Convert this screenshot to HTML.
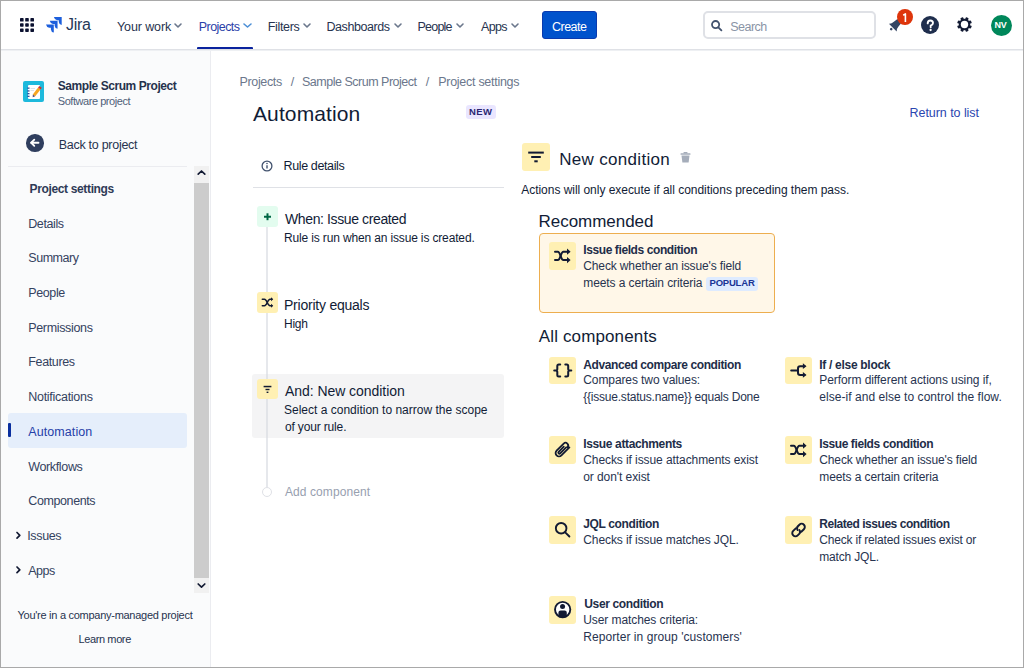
<!DOCTYPE html>
<html><head><meta charset="utf-8">
<style>
html,body{margin:0;padding:0}
body{width:1024px;height:668px;overflow:hidden;position:relative;background:#fff;font-family:"Liberation Sans",sans-serif;}
.a{position:absolute}
.t{position:absolute;white-space:nowrap;line-height:20px;font-family:"Liberation Sans",sans-serif}
.ib{position:absolute;background:#FFF0B3;border-radius:3px}
svg{position:absolute;overflow:visible}
</style></head><body>
<!-- sidebar bg -->
<div class="a" style="left:1px;top:50px;width:209px;height:618px;background:#FAFBFC"></div>
<div class="a" style="left:210px;top:50px;width:1px;height:618px;background:#EBECF0"></div>
<!-- nav bottom border/shadow -->
<div class="a" style="left:0;top:49px;width:1024px;height:1px;background:#DFE1E6"></div>
<div class="a" style="left:0;top:50px;width:1024px;height:1px;background:#EEF0F3"></div>

<!-- grid icon -->
<svg style="left:20px;top:18px" width="14" height="14" viewBox="0 0 14 14"><g fill="#0B1130"><rect x="0" y="0" width="3.6" height="3.6" rx="0.7"/><rect x="5.2" y="0" width="3.6" height="3.6" rx="0.7"/><rect x="10.4" y="0" width="3.6" height="3.6" rx="0.7"/><rect x="0" y="5.2" width="3.6" height="3.6" rx="0.7"/><rect x="5.2" y="5.2" width="3.6" height="3.6" rx="0.7"/><rect x="10.4" y="5.2" width="3.6" height="3.6" rx="0.7"/><rect x="0" y="10.4" width="3.6" height="3.6" rx="0.7"/><rect x="5.2" y="10.4" width="3.6" height="3.6" rx="0.7"/><rect x="10.4" y="10.4" width="3.6" height="3.6" rx="0.7"/></g></svg>
<!-- jira logo -->
<svg style="left:46px;top:17px" width="16" height="16" viewBox="0 0 16 16">
<g fill="#1D5FDC">
<path d="M7.9 0.1 H15.7 V7.9 Q13 7.4 12.8 4.9 V3.2 H11.1 Q8.5 3 7.9 0.1 Z"/>
<path d="M3.75 3.85 H11.55 V11.65 Q8.85 11.15 8.65 8.65 V6.95 H6.95 Q4.35 6.75 3.75 3.85 Z"/>
<path d="M0 7.6 H7.8 V15.4 Q5.1 14.9 4.9 12.4 V10.7 H3.2 Q0.6 10.5 0 7.6 Z"/>
</g></svg>
<!-- Projects underline -->
<div class="a" style="left:197px;top:46.5px;width:56px;height:2.75px;background:#0A239E;border-radius:1px 1px 0 0"></div>
<!-- nav chevrons -->
<svg style="left:0;top:0" width="1024" height="50">
<g fill="none" stroke="#6B778C" stroke-width="1.6" stroke-linecap="round" stroke-linejoin="round">
<polyline points="175,24 178,27 181,24"/>
<polyline points="304,24 307,27 310,24"/>
<polyline points="395,24 398,27 401,24"/>
<polyline points="457,24 460,27 463,24"/>
<polyline points="512,24 515,27 518,24"/>
</g>
<polyline points="244,24 247.5,27 251,24" fill="none" stroke="#4C8FD6" stroke-width="1.6" stroke-linecap="round" stroke-linejoin="round"/>
</svg>
<!-- create button -->
<div class="a" style="left:541.5px;top:11px;width:55.5px;height:28px;box-sizing:border-box;border:1px solid #0A3AAE;background:#0052CC;border-radius:3px"></div>
<!-- search -->
<div class="a" style="left:703px;top:11px;width:173px;height:28px;box-sizing:border-box;border:2px solid #DFE1E6;border-radius:5px;background:#fff"></div>
<svg style="left:711px;top:20px" width="12" height="12" viewBox="0 0 12 12">
<circle cx="4.6" cy="4.6" r="3.6" fill="none" stroke="#42526E" stroke-width="1.8"/>
<line x1="7.3" y1="7.3" x2="10.4" y2="10.4" stroke="#42526E" stroke-width="1.8" stroke-linecap="round"/>
</svg>
<!-- bell -->
<svg style="left:0;top:0" width="1024" height="50">
<g transform="translate(895.6 24.7) rotate(45)" fill="#344563"><path d="M-5.5 4 Q-3.6 2.8 -3.3 -0.8 L-2.9 -4.6 Q0 -8 2.9 -4.6 L3.3 -0.8 Q3.6 2.8 5.5 4 Z"/><circle cx="0" cy="6.2" r="1.3"/></g>
</svg>
<div class="a" style="left:897.2px;top:9.1px;width:15.8px;height:15.8px;border-radius:50%;background:#DE350B"></div>
<svg style="left:0;top:0" width="1024" height="50"><path d="M903.2 15.2 L905.4 13.9 V21.9" fill="none" stroke="#fff" stroke-width="1.6" stroke-linejoin="round"/></svg>
<!-- help -->
<div class="a" style="left:921px;top:16px;width:18px;height:18px;border-radius:50%;background:#1F2E4D"></div>
<svg style="left:0;top:0" width="1024" height="50"><path d="M927.7 23.4 Q927.7 20.5 930.3 20.5 Q933 20.5 933 23.1 Q933 24.7 930.7 25.7 V27.3" fill="none" stroke="#fff" stroke-width="1.9" stroke-linecap="round"/><circle cx="930.6" cy="30" r="1.15" fill="#fff"/></svg>
<!-- gear -->
<svg style="left:956.1px;top:16.1px" width="17" height="17" viewBox="-8.5 -8.5 17 17">
<g fill="#121A33"><circle r="5.7"/><rect x="-1.5" y="-7.4" width="3" height="2.8" rx="0.7" transform="rotate(22.5)"/><rect x="-1.5" y="-7.4" width="3" height="2.8" rx="0.7" transform="rotate(67.5)"/><rect x="-1.5" y="-7.4" width="3" height="2.8" rx="0.7" transform="rotate(112.5)"/><rect x="-1.5" y="-7.4" width="3" height="2.8" rx="0.7" transform="rotate(157.5)"/><rect x="-1.5" y="-7.4" width="3" height="2.8" rx="0.7" transform="rotate(202.5)"/><rect x="-1.5" y="-7.4" width="3" height="2.8" rx="0.7" transform="rotate(247.5)"/><rect x="-1.5" y="-7.4" width="3" height="2.8" rx="0.7" transform="rotate(292.5)"/><rect x="-1.5" y="-7.4" width="3" height="2.8" rx="0.7" transform="rotate(337.5)"/></g>
<circle r="3.7" fill="#fff"/>
</svg>
<!-- avatar -->
<div class="a" style="left:991px;top:14.5px;width:21px;height:21px;border-radius:50%;background:#00875A"></div>
<div class="t" style="left:994.5px;top:15px;font-size:9px;font-weight:bold;color:#fff;letter-spacing:-0.3px">NV</div>

<!-- project avatar -->
<div class="a" style="left:23px;top:81px;width:21px;height:21px;border-radius:2px;background:#1DB9DC"></div>
<div class="a" style="left:28px;top:84.5px;width:12px;height:14.5px;border-radius:1px;background:#fff"></div>
<svg style="left:23px;top:81px" width="21" height="21" viewBox="0 0 21 21">
<g fill="#3050A0"><rect x="4.3" y="6.5" width="2.2" height="1.3"/><rect x="4.3" y="9.3" width="2.2" height="1.3"/><rect x="4.3" y="12" width="2.2" height="1.3"/><rect x="4.3" y="14.7" width="2.2" height="1.3"/></g>
<g stroke="#C8D0DA" stroke-width="0.6"><line x1="7.5" y1="7.5" x2="12" y2="7.5"/><line x1="7.5" y1="9.5" x2="11" y2="9.5"/></g>
<path d="M12.23 15.35 L9.83 13.55 L15.1 6.6 L17.5 8.4 Z" fill="#F5A623"/>
<path d="M15.1 6.6 L17.5 8.4 L18.8 6.7 L16.4 4.9 Z" fill="#D0312D"/>
<path d="M9.7 16.2 L9.83 13.55 L12.23 15.35 Z" fill="#4A4A7A"/>
</svg>
<!-- back icon -->
<div class="a" style="left:26px;top:134px;width:17.5px;height:17.5px;border-radius:50%;background:#2F3E5E"></div>
<svg style="left:26px;top:134px" width="18" height="18" viewBox="0 0 18 18">
<g fill="none" stroke="#fff" stroke-width="1.8" stroke-linecap="round" stroke-linejoin="round">
<line x1="5.2" y1="8.75" x2="12.5" y2="8.75"/><polyline points="8.3,5.6 5.2,8.75 8.3,11.9"/>
</g></svg>
<!-- sidebar divider -->
<div class="a" style="left:8px;top:166px;width:179px;height:1px;background:#EBECF0"></div>
<!-- scrollbar -->
<div class="a" style="left:194px;top:166px;width:15px;height:427px;background:#F1F1F1"></div>
<div class="a" style="left:194px;top:182.5px;width:15px;height:395.5px;background:#CCCCCC"></div>
<svg style="left:194px;top:166px" width="15" height="427">
<polyline points="4.2,8.2 7.5,5 10.8,8.2" fill="none" stroke="#121A33" stroke-width="1.7" stroke-linecap="round" stroke-linejoin="round"/>
<polyline points="4.2,418 7.5,421.2 10.8,418" fill="none" stroke="#121A33" stroke-width="1.7" stroke-linecap="round" stroke-linejoin="round"/>
</svg>
<!-- automation selected -->
<div class="a" style="left:8px;top:413px;width:179px;height:34.5px;border-radius:3px;background:#E5EEFB"></div>
<div class="a" style="left:8px;top:423px;width:3px;height:14px;border-radius:1px;background:#0A2F9E"></div>
<!-- issues/apps chevrons -->
<svg style="left:0;top:0" width="210" height="668">
<g fill="none" stroke="#121A33" stroke-width="1.7" stroke-linecap="round" stroke-linejoin="round">
<polyline points="17,532.5 19.8,535.3 17,538.1"/>
<polyline points="17,567 19.8,569.8 17,572.6"/>
</g></svg>

<!-- NEW lozenge -->
<div class="a" style="left:466px;top:105px;width:29.5px;height:14px;border-radius:3px;background:#EAE6FF"></div>
<!-- info icon -->
<svg style="left:261px;top:159.5px" width="12" height="12" viewBox="0 0 12 12">
<circle cx="6" cy="6" r="4.9" fill="none" stroke="#42526E" stroke-width="1.3"/>
<line x1="6" y1="5.3" x2="6" y2="8.5" stroke="#42526E" stroke-width="1.4"/>
<circle cx="6" cy="3.5" r="0.8" fill="#42526E"/>
</svg>
<!-- rule details divider -->
<div class="a" style="left:252.5px;top:186.5px;width:251.5px;height:1.5px;background:#DFE1E6"></div>
<!-- timeline -->
<div class="a" style="left:266px;top:226px;width:2px;height:261px;background:#E6E8EC"></div>
<div class="a" style="left:252px;top:374px;width:252px;height:64px;border-radius:3px;background:#F4F4F5"></div>
<div class="a" style="left:266px;top:374px;width:2px;height:6px;background:#E2E4E8"></div>
<div class="a" style="left:266px;top:398px;width:2px;height:40px;background:#E2E4E8"></div>
<div class="a" style="left:257px;top:206px;width:21px;height:21px;border-radius:3px;background:#E3FCEF"></div>
<svg style="left:257px;top:206px" width="21" height="21">
<g stroke="#006644" stroke-width="2"><line x1="10.5" y1="7.3" x2="10.5" y2="14.2"/><line x1="7" y1="10.75" x2="14" y2="10.75"/></g></svg>
<div class="ib" style="left:257px;top:292px;width:21px;height:21px"></div>
<svg style="left:257px;top:292px" width="21" height="21" viewBox="0 0 21 21">
<g fill="none" stroke="#121A33" stroke-width="1.5" stroke-linecap="round">
<path d="M5.3 7.2 H7.5 C10 7.2 10.5 13.8 13 13.8 H14.8"/>
<path d="M5.3 13.8 H7.5 C10 13.8 10.5 7.2 13 7.2 H14.8"/>
</g>
<g fill="#121A33"><path d="M14 5.2 L16.2 7.2 L14 9.2 Z"/><path d="M14 11.8 L16.2 13.8 L14 15.8 Z"/></g>
</svg>
<div class="ib" style="left:257px;top:378.5px;width:21px;height:20.5px"></div>
<svg style="left:257px;top:378.5px" width="21" height="21" viewBox="0 0 21 21">
<g fill="#121A33"><rect x="6.6" y="6.8" width="7.8" height="1.5"/><rect x="8.5" y="9.8" width="4" height="1.4"/><rect x="9.6" y="12.6" width="1.8" height="1.4"/></g>
</svg>
<div class="a" style="left:261.75px;top:486.5px;width:10.5px;height:10.5px;box-sizing:border-box;border-radius:50%;border:1.5px solid #DFE1E6;background:#fff"></div>

<!-- New condition header -->
<div class="ib" style="left:521.5px;top:143px;width:28px;height:28px"></div>
<svg style="left:521.5px;top:143px" width="28" height="28" viewBox="0 0 28 28">
<g fill="#121A33"><rect x="6.2" y="8.6" width="15.6" height="2"/><rect x="9.2" y="13" width="9.6" height="2"/><rect x="12.3" y="17.3" width="3.4" height="2"/></g>
</svg>
<svg style="left:680px;top:151.5px" width="11" height="11" viewBox="0 0 11 11">
<g fill="#A5ADBA"><rect x="0.5" y="1.2" width="10" height="1.6" rx="0.5"/><rect x="3.5" y="0" width="4" height="1.6" rx="0.5"/><path d="M1.5 3.5 H9.5 L8.6 10.5 H2.4 Z"/></g>
</svg>

<!-- recommended card -->
<div class="a" style="left:539px;top:232.5px;width:236px;height:80px;box-sizing:border-box;border:1.5px solid #EDAE4F;border-radius:4px;background:#FFF7E8"></div>
<div class="ib" style="left:548.75px;top:242px;width:27.5px;height:27.5px"></div>
<div class="a" style="left:706px;top:277px;width:51.5px;height:13.5px;border-radius:3px;background:#DEEBFF"></div>

<!-- component icon boxes -->
<div class="ib" style="left:548.75px;top:356.75px;width:27.5px;height:27.5px"></div>
<div class="ib" style="left:548.75px;top:436.25px;width:27.5px;height:27.5px"></div>
<div class="ib" style="left:548.75px;top:516.25px;width:27.5px;height:27.5px"></div>
<div class="ib" style="left:548.75px;top:596.25px;width:27.5px;height:27.5px"></div>
<div class="ib" style="left:784.75px;top:356.75px;width:27.5px;height:27.5px"></div>
<div class="ib" style="left:784.75px;top:436.25px;width:27.5px;height:27.5px"></div>
<div class="ib" style="left:784.75px;top:516.25px;width:27.5px;height:27.5px"></div>

<svg style="left:548.75px;top:242px" width="28" height="28" viewBox="0 0 28 28">
<g fill="none" stroke="#121A33" stroke-width="2" stroke-linecap="round"><path d="M6 9.7 H8.8 C11.6 9.7 11.6 18.1 14.4 18.1 H19"/><path d="M6 18.1 H8.8 C11.6 18.1 11.6 9.7 14.4 9.7 H19"/></g>
<g fill="#121A33"><path d="M18 6.6 L21.6 9.7 L18 12.8 Z"/><path d="M18 15 L21.6 18.1 L18 21.2 Z"/></g></svg>
<svg style="left:548.75px;top:356.75px" width="28" height="28" viewBox="0 0 28 28">
<g fill="none" stroke="#121A33" stroke-width="2" stroke-linecap="round" stroke-linejoin="round">
<path d="M11.2 7.4 H9.8 Q8.3 7.4 8.3 8.9 V12 Q8.3 13.5 6.8 13.5 H5.2 M6.8 13.5 Q8.3 13.5 8.3 15 V18.1 Q8.3 19.6 9.8 19.6 H11.2"/>
<path d="M16.3 7.4 H17.7 Q19.2 7.4 19.2 8.9 V12 Q19.2 13.5 20.7 13.5 H22.3 M20.7 13.5 Q19.2 13.5 19.2 15 V18.1 Q19.2 19.6 17.7 19.6 H16.3"/>
</g></svg>
<svg style="left:784.75px;top:356.75px" width="28" height="28" viewBox="0 0 28 28">
<g fill="none" stroke="#121A33" stroke-width="2" stroke-linecap="round" stroke-linejoin="round">
<path d="M6.2 13.5 H12.8"/><path d="M19.5 9.2 H15.2 Q13 9.2 13 11.4 V15.7 Q13 17.9 15.2 17.9 H19.5"/></g>
<g fill="#121A33"><path d="M17.9 6.3 L21.5 9.2 L17.9 12.1 Z"/><path d="M17.9 15 L21.5 17.9 L17.9 20.8 Z"/></g></svg>
<svg style="left:548.75px;top:436.25px" width="28" height="28" viewBox="0 0 28 28">
<g transform="translate(13.4 13.6) rotate(-45)" fill="none" stroke="#121A33" stroke-width="1.8" stroke-linecap="round">
<path d="M6.5 3.4 H-4.8 A3.4 3.4 0 0 1 -4.8 -3.4 H5.2 A2.6 2.6 0 0 1 5.2 1.8"/>
<path d="M4.2 1.1 H-4.2 A1.1 1.1 0 0 1 -4.2 -1.1 H3"/>
</g></svg>
<svg style="left:784.75px;top:436.25px" width="28" height="28" viewBox="0 0 28 28">
<g fill="none" stroke="#121A33" stroke-width="2" stroke-linecap="round"><path d="M6 9.7 H8.8 C11.6 9.7 11.6 18.1 14.4 18.1 H19"/><path d="M6 18.1 H8.8 C11.6 18.1 11.6 9.7 14.4 9.7 H19"/></g>
<g fill="#121A33"><path d="M18 6.6 L21.6 9.7 L18 12.8 Z"/><path d="M18 15 L21.6 18.1 L18 21.2 Z"/></g></svg>
<svg style="left:548.75px;top:516.25px" width="28" height="28" viewBox="0 0 28 28">
<g fill="none" stroke="#121A33" stroke-width="1.9" stroke-linecap="round"><circle cx="12.15" cy="12.25" r="5.3"/><path d="M16.2 16.3 L20.4 20.5"/></g></svg>
<svg style="left:784.75px;top:516.25px" width="28" height="28" viewBox="0 0 28 28">
<g transform="translate(13.55 14.05) rotate(-45) scale(1.22)" fill="none" stroke="#121A33" stroke-width="1.6" stroke-linecap="round">
<path d="M-0.6 -2.6 H-3.6 A2.6 2.6 0 0 0 -3.6 2.6 H-1.8 Q0 2.6 0.5 0.6"/>
<path d="M0.6 2.6 H3.6 A2.6 2.6 0 0 0 3.6 -2.6 H1.8 Q0 -2.6 -0.5 -0.6"/>
</g></svg>
<svg style="left:548.75px;top:596.25px" width="28" height="28" viewBox="0 0 28 28">
<defs><clipPath id="uc"><circle cx="13.65" cy="13.55" r="7.6"/></clipPath></defs>
<circle cx="13.65" cy="13.55" r="7.65" fill="#fff" stroke="#121A33" stroke-width="1.9"/>
<circle cx="13.55" cy="10.6" r="2.5" fill="#121A33"/>
<g clip-path="url(#uc)"><rect x="9.4" y="14.6" width="8.4" height="9" rx="2.2" fill="#121A33"/></g>
</svg>


<div id="jira" class="t" style="left:66.10px;top:15.20px;font-size:16px;color:#253858;letter-spacing:-0.294px">Jira</div>
<div id="nav1" class="t" style="left:117.00px;top:16.50px;font-size:12.5px;color:#27334F;letter-spacing:-0.109px">Your work</div>
<div id="nav2" class="t" style="left:198.75px;top:16.50px;font-size:12.5px;color:#2A40A8;letter-spacing:-0.558px">Projects</div>
<div id="nav3" class="t" style="left:267.75px;top:16.50px;font-size:12.5px;color:#27334F;letter-spacing:-0.338px">Filters</div>
<div id="nav4" class="t" style="left:326.50px;top:16.50px;font-size:12.5px;color:#27334F;letter-spacing:-0.434px">Dashboards</div>
<div id="nav5" class="t" style="left:417.50px;top:16.50px;font-size:12.5px;color:#27334F;letter-spacing:-0.785px">People</div>
<div id="nav6" class="t" style="left:481.00px;top:16.50px;font-size:12.5px;color:#27334F;letter-spacing:-0.664px">Apps</div>
<div id="create" class="t" style="left:552.00px;top:16.50px;font-size:12.5px;color:#FFFFFF;letter-spacing:-0.525px">Create</div>
<div id="search" class="t" style="left:730.25px;top:16.50px;font-size:12.5px;color:#8A94A6;letter-spacing:-0.521px">Search</div>
<div id="proj" class="t" style="left:57.75px;top:75.50px;font-size:12px;font-weight:bold;color:#26324D;letter-spacing:-0.441px">Sample Scrum Project</div>
<div id="projsub" class="t" style="left:57.75px;top:90.50px;font-size:11px;color:#505F79;letter-spacing:-0.449px">Software project</div>
<div id="back" class="t" style="left:58.75px;top:134.75px;font-size:12.5px;color:#27334F;letter-spacing:-0.281px">Back to project</div>
<div id="psett" class="t" style="left:29.50px;top:179.00px;font-size:12px;font-weight:bold;color:#2E3A56;letter-spacing:-0.352px">Project settings</div>
<div id="side0" class="t" style="left:28.25px;top:213.50px;font-size:12.5px;color:#34425F;letter-spacing:-0.410px">Details</div>
<div id="side1" class="t" style="left:28.25px;top:248.22px;font-size:12.5px;color:#34425F;letter-spacing:-0.446px">Summary</div>
<div id="side2" class="t" style="left:28.25px;top:282.94px;font-size:12.5px;color:#34425F;letter-spacing:-0.389px">People</div>
<div id="side3" class="t" style="left:28.25px;top:317.66px;font-size:12.5px;color:#34425F;letter-spacing:-0.340px">Permissions</div>
<div id="side4" class="t" style="left:28.25px;top:352.38px;font-size:12.5px;color:#34425F;letter-spacing:-0.352px">Features</div>
<div id="side5" class="t" style="left:28.25px;top:387.10px;font-size:12.5px;color:#34425F;letter-spacing:-0.284px">Notifications</div>
<div id="side6" class="t" style="left:28.25px;top:421.82px;font-size:12.5px;color:#2540A8;letter-spacing:0.085px">Automation</div>
<div id="side7" class="t" style="left:28.25px;top:456.54px;font-size:12.5px;color:#34425F;letter-spacing:-0.359px">Workflows</div>
<div id="side8" class="t" style="left:28.25px;top:491.26px;font-size:12.5px;color:#34425F;letter-spacing:-0.394px">Components</div>
<div id="side9" class="t" style="left:27.25px;top:525.98px;font-size:12.5px;color:#34425F;letter-spacing:-0.361px">Issues</div>
<div id="side10" class="t" style="left:28.25px;top:560.70px;font-size:12.5px;color:#34425F;letter-spacing:-0.475px">Apps</div>
<div id="company" class="t" style="left:17.50px;top:604.50px;font-size:11px;color:#27334F;letter-spacing:-0.273px">You're in a company-managed project</div>
<div id="learn" class="t" style="left:78.50px;top:628.50px;font-size:11px;color:#27334F;letter-spacing:-0.389px">Learn more</div>
<div id="bc1" class="t" style="left:239.50px;top:72.00px;font-size:12.5px;color:#6B778C;letter-spacing:-0.344px">Projects</div>
<div id="bcs1" class="t" style="left:290.75px;top:72.00px;font-size:12.5px;color:#6B778C;letter-spacing:0.000px">/</div>
<div id="bc2" class="t" style="left:302.00px;top:72.00px;font-size:12.5px;color:#6B778C;letter-spacing:-0.492px">Sample Scrum Project</div>
<div id="bcs2" class="t" style="left:425.75px;top:72.00px;font-size:12.5px;color:#6B778C;letter-spacing:0.000px">/</div>
<div id="bc3" class="t" style="left:438.25px;top:72.00px;font-size:12.5px;color:#6B778C;letter-spacing:-0.280px">Project settings</div>
<div id="title" class="t" style="left:253.00px;top:103.50px;font-size:21px;color:#111C36;letter-spacing:0.113px">Automation</div>
<div id="newloz" class="t" style="left:469.00px;top:101.50px;font-size:9.5px;font-weight:bold;color:#2B2672;letter-spacing:0.418px">NEW</div>
<div id="ruled" class="t" style="left:283.50px;top:156.00px;font-size:12.5px;color:#111C36;letter-spacing:-0.370px">Rule details</div>
<div id="ret" class="t" style="left:909.50px;top:103.35px;font-size:12.5px;color:#2B46B0;letter-spacing:-0.051px">Return to list</div>
<div id="when" class="t" style="left:285.00px;top:209.25px;font-size:14px;color:#111C36;letter-spacing:-0.383px">When: Issue created</div>
<div id="whend" class="t" style="left:284.00px;top:228.00px;font-size:12px;color:#111C36;letter-spacing:-0.149px">Rule is run when an issue is created.</div>
<div id="prio" class="t" style="left:284.00px;top:295.00px;font-size:14px;color:#111C36;letter-spacing:-0.229px">Priority equals</div>
<div id="priod" class="t" style="left:284.00px;top:313.50px;font-size:12px;color:#111C36;letter-spacing:-0.247px">High</div>
<div id="and" class="t" style="left:285.00px;top:380.50px;font-size:14px;color:#111C36;letter-spacing:-0.052px">And: New condition</div>
<div id="andd1" class="t" style="left:284.00px;top:399.75px;font-size:12px;color:#111C36;letter-spacing:0.001px">Select a condition to narrow the scope</div>
<div id="andd2" class="t" style="left:285.00px;top:416.50px;font-size:12px;color:#111C36;letter-spacing:-0.158px">of your rule.</div>
<div id="addc" class="t" style="left:285.00px;top:482.25px;font-size:12px;color:#97A0AF;letter-spacing:0.078px">Add component</div>
<div id="newc" class="t" style="left:559.25px;top:150.00px;font-size:17px;color:#111C36;letter-spacing:0.310px">New condition</div>
<div id="actions" class="t" style="left:521.25px;top:179.75px;font-size:12px;color:#111C36;letter-spacing:-0.035px">Actions will only execute if all conditions preceding them pass.</div>
<div id="rec" class="t" style="left:538.50px;top:211.75px;font-size:17px;color:#111C36;letter-spacing:-0.029px">Recommended</div>
<div id="allc" class="t" style="left:538.75px;top:326.75px;font-size:17px;color:#111C36;letter-spacing:0.136px">All components</div>
<div id="rc_t" class="t" style="left:583.25px;top:239.90px;font-size:12px;font-weight:bold;color:#222D48;letter-spacing:-0.402px">Issue fields condition</div>
<div id="rc_d1" class="t" style="left:583.25px;top:255.80px;font-size:12px;color:#27334F;letter-spacing:-0.128px">Check whether an issue's field</div>
<div id="rc_d2" class="t" style="left:583.25px;top:272.70px;font-size:12px;color:#27334F;letter-spacing:-0.093px">meets a certain criteria</div>
<div id="popular" class="t" style="left:709.50px;top:273.00px;font-size:9.5px;font-weight:bold;color:#1A3494;letter-spacing:-0.200px">POPULAR</div>
<div id="c00_t" class="t" style="left:583.25px;top:354.65px;font-size:12px;font-weight:bold;color:#222D48;letter-spacing:-0.401px">Advanced compare condition</div>
<div id="c00_d0" class="t" style="left:583.25px;top:370.35px;font-size:12px;color:#27334F;letter-spacing:-0.094px">Compares two values:</div>
<div id="c00_d1" class="t" style="left:583.25px;top:387.25px;font-size:12px;color:#27334F;letter-spacing:-0.218px">{{issue.status.name}} equals Done</div>
<div id="c01_t" class="t" style="left:583.25px;top:434.15px;font-size:12px;font-weight:bold;color:#222D48;letter-spacing:-0.360px">Issue attachments</div>
<div id="c01_d0" class="t" style="left:583.25px;top:449.85px;font-size:12px;color:#27334F;letter-spacing:-0.083px">Checks if issue attachments exist</div>
<div id="c01_d1" class="t" style="left:583.25px;top:466.75px;font-size:12px;color:#27334F;letter-spacing:-0.078px">or don't exist</div>
<div id="c02_t" class="t" style="left:583.25px;top:514.15px;font-size:12px;font-weight:bold;color:#222D48;letter-spacing:-0.369px">JQL condition</div>
<div id="c02_d0" class="t" style="left:583.25px;top:529.85px;font-size:12px;color:#27334F;letter-spacing:-0.088px">Checks if issue matches JQL.</div>
<div id="c03_t" class="t" style="left:584.25px;top:594.15px;font-size:12px;font-weight:bold;color:#222D48;letter-spacing:-0.355px">User condition</div>
<div id="c03_d0" class="t" style="left:583.25px;top:609.85px;font-size:12px;color:#27334F;letter-spacing:-0.083px">User matches criteria:</div>
<div id="c03_d1" class="t" style="left:583.25px;top:626.75px;font-size:12px;color:#27334F;letter-spacing:0.066px">Reporter in group 'customers'</div>
<div id="c10_t" class="t" style="left:819.25px;top:354.65px;font-size:12px;font-weight:bold;color:#222D48;letter-spacing:-0.296px">If / else block</div>
<div id="c10_d0" class="t" style="left:819.25px;top:370.35px;font-size:12px;color:#27334F;letter-spacing:-0.077px">Perform different actions using if,</div>
<div id="c10_d1" class="t" style="left:819.25px;top:387.25px;font-size:12px;color:#27334F;letter-spacing:0.048px">else-if and else to control the flow.</div>
<div id="c11_t" class="t" style="left:819.25px;top:434.15px;font-size:12px;font-weight:bold;color:#222D48;letter-spacing:-0.402px">Issue fields condition</div>
<div id="c11_d0" class="t" style="left:819.25px;top:449.85px;font-size:12px;color:#27334F;letter-spacing:-0.128px">Check whether an issue's field</div>
<div id="c11_d1" class="t" style="left:819.25px;top:466.75px;font-size:12px;color:#27334F;letter-spacing:-0.093px">meets a certain criteria</div>
<div id="c12_t" class="t" style="left:819.25px;top:514.15px;font-size:12px;font-weight:bold;color:#222D48;letter-spacing:-0.462px">Related issues condition</div>
<div id="c12_d0" class="t" style="left:819.25px;top:529.85px;font-size:12px;color:#27334F;letter-spacing:-0.185px">Check if related issues exist or</div>
<div id="c12_d1" class="t" style="left:819.25px;top:546.75px;font-size:12px;color:#27334F;letter-spacing:-0.178px">match JQL.</div>

<!-- outer frame -->
<div class="a" style="left:0;top:0;width:1024px;height:668px;box-sizing:border-box;border:1px solid #A9A9A9;pointer-events:none"></div>
</body></html>
